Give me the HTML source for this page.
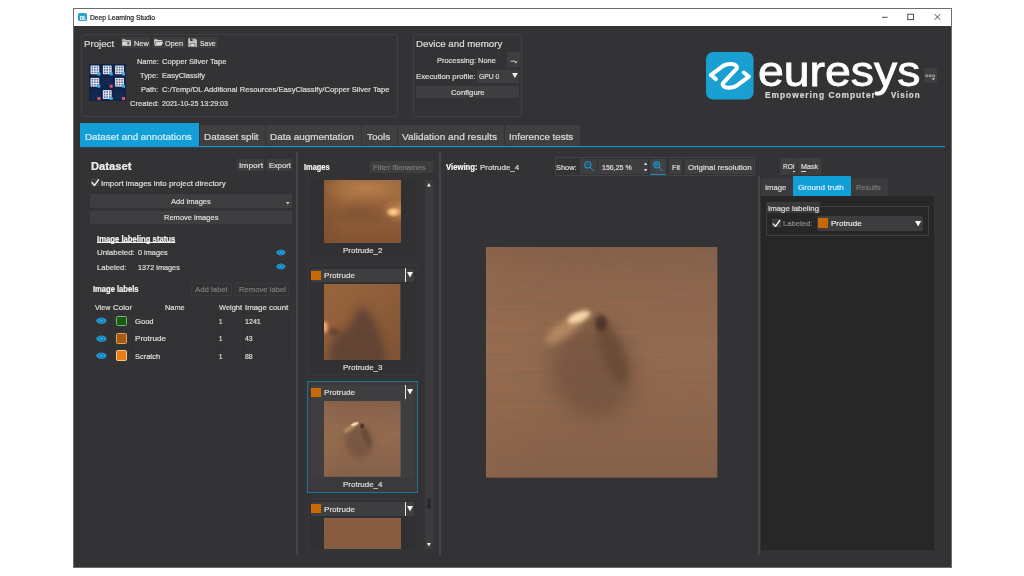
<!DOCTYPE html>
<html lang="en"><head><meta charset="utf-8"><title>Deep Learning Studio</title>
<style>
html,body{margin:0;padding:0;background:#fff;}
body{width:1024px;height:576px;position:relative;overflow:hidden;font-family:"Liberation Sans",sans-serif;}
.r{position:absolute;}
.t{position:absolute;white-space:pre;line-height:1;transform-origin:0 0;-webkit-text-stroke:0.22px currentColor;}
.sf{font-family:"Liberation Serif",serif;}
svg{position:absolute;overflow:visible;}
</style></head><body>
<div class="r" style="left:72.50px;top:8.00px;width:879.50px;height:560.00px;background:#fff;border:1px solid #6e6e6e;box-sizing:border-box;"></div>
<div class="r" style="left:73.50px;top:26.30px;width:877.50px;height:540.70px;background:#333335;"></div>
<div class="r" style="left:78.00px;top:12.50px;width:9.00px;height:8.80px;background:#2fa3cf;border-radius:1.5px;"></div>
<svg style="left:876px;top:9px" width="72" height="17" viewBox="876 9 72 17"><g stroke="#222" stroke-width="0.8" fill="none"><path d="M882 17.3H887.6"/><rect x="907.8" y="14.2" width="5.7" height="5.5"/><path d="M934.6 14.1L940.3 19.8M940.3 14.1L934.6 19.8"/></g></svg>
<div class="r" style="left:81.40px;top:34.20px;width:316.60px;height:83.00px;border:1px solid #404042;box-sizing:border-box;border-radius:3px;"></div>
<div class="r" style="left:121.30px;top:37.00px;width:28.90px;height:11.40px;background:#3e3e40;border-radius:1px;"></div>
<div class="r" style="left:152.60px;top:37.00px;width:32.30px;height:11.40px;background:#3e3e40;border-radius:1px;"></div>
<div class="r" style="left:186.60px;top:37.00px;width:30.00px;height:11.40px;background:#3e3e40;border-radius:1px;"></div>
<svg style="left:122.3px;top:39.1px" width="9.2" height="7" viewBox="0 0 92 76" preserveAspectRatio="none"><path d="M2 8 Q2 2 8 2 H30 L38 12 H84 Q90 12 90 18 V68 Q90 74 84 74 H8 Q2 74 2 68Z" fill="#d8d8d8"/><path d="M2 24H90" stroke="#3e3e40" stroke-width="6"/><path d="M62 34V62M48 48H76" stroke="#3e3e40" stroke-width="9"/></svg>
<svg style="left:153.7px;top:39.1px" width="9.2" height="7" viewBox="0 0 92 76" preserveAspectRatio="none"><path d="M2 8 Q2 2 8 2 H30 L38 12 H74 Q80 12 80 18 V24 H20 L2 62Z" fill="#d8d8d8"/><path d="M24 30 H92 L74 74 H4Z" fill="#d8d8d8"/></svg>
<svg style="left:188px;top:38.3px" width="9.1" height="9.4" viewBox="0 0 92 92" preserveAspectRatio="none"><path d="M4 4 H72 L88 20 V88 H4Z" fill="#d8d8d8"/><rect x="20" y="4" width="44" height="28" fill="#3e3e40"/><rect x="46" y="8" width="12" height="20" fill="#d8d8d8"/><rect x="18" y="48" width="56" height="40" fill="#3e3e40"/><rect x="24" y="54" width="44" height="30" fill="#d8d8d8"/></svg>
<svg style="left:89px;top:63.6px" width="37" height="37" viewBox="0 0 37 37"><rect width="37" height="37" fill="#0f2449"/><rect x="1.9" y="1.9" width="8" height="8" fill="#54678f"/><path d="M1.90 2.10h8M2.10 1.90v8M1.90 4.65h8M4.65 1.90v8M1.90 7.20h8M7.20 1.90v8M1.90 9.75h8M9.75 1.90v8" stroke="#e6ebf7" stroke-width="1.0" fill="none"/><rect x="8.4" y="8.4" width="3" height="3" fill="#3aaeea"/><rect x="14.2" y="1.9" width="8" height="8" fill="#54678f"/><path d="M14.20 2.10h8M14.40 1.90v8M14.20 4.65h8M16.95 1.90v8M14.20 7.20h8M19.50 1.90v8M14.20 9.75h8M22.05 1.90v8" stroke="#e6ebf7" stroke-width="1.0" fill="none"/><rect x="20.7" y="8.4" width="3" height="3" fill="#3aaeea"/><rect x="26.5" y="1.9" width="8" height="8" fill="#54678f"/><path d="M26.50 2.10h8M26.70 1.90v8M26.50 4.65h8M29.25 1.90v8M26.50 7.20h8M31.80 1.90v8M26.50 9.75h8M34.35 1.90v8" stroke="#e6ebf7" stroke-width="1.0" fill="none"/><rect x="33.0" y="8.4" width="3" height="3" fill="#3aaeea"/><rect x="1.9" y="14.2" width="8" height="8" fill="#54678f"/><path d="M1.90 14.40h8M2.10 14.20v8M1.90 16.95h8M4.65 14.20v8M1.90 19.50h8M7.20 14.20v8M1.90 22.05h8M9.75 14.20v8" stroke="#e6ebf7" stroke-width="1.0" fill="none"/><rect x="8.4" y="20.7" width="3" height="3" fill="#3aaeea"/><path d="M14.20 14.40h8M14.40 14.20v8M14.20 16.95h8M16.95 14.20v8M14.20 19.50h8M19.50 14.20v8M14.20 22.05h8M22.05 14.20v8" stroke="#1d3360" stroke-width="0.6" fill="none"/><rect x="20.7" y="20.7" width="3" height="3" fill="#e0566c"/><rect x="26.5" y="14.2" width="8" height="8" fill="#54678f"/><path d="M26.50 14.40h8M26.70 14.20v8M26.50 16.95h8M29.25 14.20v8M26.50 19.50h8M31.80 14.20v8M26.50 22.05h8M34.35 14.20v8" stroke="#e6ebf7" stroke-width="1.0" fill="none"/><rect x="33.0" y="20.7" width="3" height="3" fill="#3aaeea"/><path d="M1.90 26.70h8M2.10 26.50v8M1.90 29.25h8M4.65 26.50v8M1.90 31.80h8M7.20 26.50v8M1.90 34.35h8M9.75 26.50v8" stroke="#1d3360" stroke-width="0.6" fill="none"/><rect x="8.4" y="33.0" width="3" height="3" fill="#e0566c"/><rect x="14.2" y="26.5" width="8" height="8" fill="#54678f"/><path d="M14.20 26.70h8M14.40 26.50v8M14.20 29.25h8M16.95 26.50v8M14.20 31.80h8M19.50 26.50v8M14.20 34.35h8M22.05 26.50v8" stroke="#e6ebf7" stroke-width="1.0" fill="none"/><rect x="20.7" y="33.0" width="3" height="3" fill="#3aaeea"/><path d="M26.50 26.70h8M26.70 26.50v8M26.50 29.25h8M29.25 26.50v8M26.50 31.80h8M31.80 26.50v8M26.50 34.35h8M34.35 26.50v8" stroke="#1d3360" stroke-width="0.6" fill="none"/><rect x="33.0" y="33.0" width="3" height="3" fill="#e0566c"/></svg>
<div class="r" style="left:412.50px;top:34.20px;width:109.80px;height:83.00px;border:1px solid #404042;box-sizing:border-box;border-radius:3px;"></div>
<div class="r" style="left:507.00px;top:52.30px;width:12.50px;height:14.40px;background:#3e3e40;border-radius:1px;"></div>
<svg style="left:510px;top:60px" width="8" height="4" viewBox="0 0 8 4"><path d="M0.5 1.2H5.2" stroke="#d8d8d8" stroke-width="0.9"/><path d="M4.2 1.4H7.4L5.8 3.4Z" fill="#d8d8d8"/></svg>
<div class="r" style="left:476.90px;top:69.80px;width:42.60px;height:13.00px;background:#3e3e40;border-radius:1px;"></div>
<svg style="left:512.2px;top:73.4px" width="5.8" height="5" viewBox="0 0 58 50"><path d="M0 0H58L29 50Z" fill="#f0f0f0"/></svg>
<div class="r" style="left:415.60px;top:85.50px;width:103.90px;height:12.50px;background:#3e3e40;border-radius:1px;"></div>
<svg style="left:706px;top:51.7px" width="47.6" height="47.6" viewBox="0 0 47.6 47.6"><rect width="47.6" height="47.6" rx="7.2" fill="#1a9fd2"/><path d="M9.90 27.10 L4.80 23.05 L16.40 14.30 C18.80 12.50 21.50 11.90 24.80 11.90 C30.30 11.90 32.90 15.40 28.90 18.30 L18.70 29.30 C14.70 32.20 17.30 35.70 22.80 35.70 C26.10 35.70 28.80 35.10 31.20 33.30 L42.80 24.55 L37.70 20.50" fill="none" stroke="#fff" stroke-width="4" stroke-linecap="round" stroke-linejoin="round"/></svg>
<div class="r" style="left:924.00px;top:68.30px;width:13.40px;height:14.60px;background:#3e3e40;border-radius:1px;"></div>
<svg style="left:925.2px;top:73.6px" width="10.5" height="7" viewBox="0 0 105 70"><g fill="none" stroke="#cfcfcf" stroke-width="7"><circle cx="18" cy="18" r="11"/><circle cx="52" cy="18" r="11"/><circle cx="86" cy="18" r="11"/></g><path d="M66 42H100L83 62Z" fill="#cfcfcf"/></svg>
<div class="r" style="left:79.80px;top:122.60px;width:119.50px;height:24.40px;background:#129ed6;"></div>
<div class="r" style="left:200.20px;top:125.40px;width:64.80px;height:20.80px;background:#3f3f41;"></div>
<div class="r" style="left:266.00px;top:125.40px;width:95.00px;height:20.80px;background:#3f3f41;"></div>
<div class="r" style="left:362.00px;top:125.40px;width:34.80px;height:20.80px;background:#3f3f41;"></div>
<div class="r" style="left:397.80px;top:125.40px;width:106.00px;height:20.80px;background:#3f3f41;"></div>
<div class="r" style="left:504.80px;top:125.40px;width:75.20px;height:20.80px;background:#3f3f41;"></div>
<div class="r" style="left:79.80px;top:145.70px;width:865.20px;height:1.30px;background:#2e8ab4;"></div>
<div class="r" style="left:79.80px;top:147.00px;width:865.20px;height:1.00px;background:#114c68;"></div>
<div class="r" style="left:237.30px;top:158.80px;width:26.80px;height:12.40px;background:#3e3e40;border-radius:1px;"></div>
<div class="r" style="left:267.40px;top:158.80px;width:24.80px;height:12.40px;background:#3e3e40;border-radius:1px;"></div>
<div class="r" style="left:91.10px;top:178.70px;width:8.40px;height:7.60px;background:#3a3a3c;border:1px solid #464648;box-sizing:border-box;"></div>
<svg style="left:0;top:0" width="1024" height="576" viewBox="0 0 1024 576"><path d="M92.0 182.5 L94.4 185.5 L98.6 179.6" fill="none" stroke="#f6f6f6" stroke-width="1.3" stroke-linecap="round" stroke-linejoin="round"/></svg>
<div class="r" style="left:90.20px;top:193.80px;width:202.00px;height:14.20px;background:#3e3e40;border-radius:1px;"></div>
<svg style="left:286.4px;top:202.4px" width="3.6" height="2.4" viewBox="0 0 36 24"><path d="M0 0H36L18 24Z" fill="#cfcfcf"/></svg>
<div class="r" style="left:90.20px;top:211.30px;width:202.00px;height:12.90px;background:#3e3e40;border-radius:1px;"></div>
<svg style="left:276.10px;top:249.37px" width="9.8" height="6.86" viewBox="0 0 108 76"><path d="M1 38 C20 -6 88 -6 107 38 C88 82 20 82 1 38Z" fill="#1b9bd8"/><circle cx="54" cy="38" r="21" fill="none" stroke="#245c7e" stroke-width="6"/><circle cx="52" cy="35" r="5" fill="#8ad6f6"/></svg>
<svg style="left:276.10px;top:263.17px" width="9.8" height="6.86" viewBox="0 0 108 76"><path d="M1 38 C20 -6 88 -6 107 38 C88 82 20 82 1 38Z" fill="#1b9bd8"/><circle cx="54" cy="38" r="21" fill="none" stroke="#245c7e" stroke-width="6"/><circle cx="52" cy="35" r="5" fill="#8ad6f6"/></svg>
<div class="r" style="left:191.30px;top:282.50px;width:40.50px;height:13.20px;border:1px solid #3a3a3c;box-sizing:border-box;border-radius:1px;"></div>
<div class="r" style="left:235.00px;top:282.50px;width:53.70px;height:13.20px;border:1px solid #3a3a3c;box-sizing:border-box;border-radius:1px;"></div>
<div class="r" style="left:92.50px;top:313.10px;width:195.30px;height:0.80px;background:#2f2f31;"></div>
<div class="r" style="left:92.50px;top:330.30px;width:195.30px;height:0.80px;background:#2f2f31;"></div>
<div class="r" style="left:92.50px;top:347.30px;width:195.30px;height:0.80px;background:#2f2f31;"></div>
<div class="r" style="left:92.50px;top:364.50px;width:195.30px;height:0.80px;background:#2f2f31;"></div>
<div class="r" style="left:110.30px;top:313.10px;width:0.80px;height:51.40px;background:#2f2f31;"></div>
<div class="r" style="left:132.40px;top:313.10px;width:0.80px;height:51.40px;background:#2f2f31;"></div>
<div class="r" style="left:216.50px;top:313.10px;width:0.80px;height:51.40px;background:#2f2f31;"></div>
<div class="r" style="left:242.70px;top:313.10px;width:0.80px;height:51.40px;background:#2f2f31;"></div>
<div class="r" style="left:287.50px;top:313.10px;width:0.80px;height:51.40px;background:#2f2f31;"></div>
<svg style="left:95.90px;top:317.32px" width="10.8" height="7.56" viewBox="0 0 108 76"><path d="M1 38 C20 -6 88 -6 107 38 C88 82 20 82 1 38Z" fill="#1b9bd8"/><circle cx="54" cy="38" r="21" fill="none" stroke="#245c7e" stroke-width="6"/><circle cx="52" cy="35" r="5" fill="#8ad6f6"/></svg>
<div class="r" style="left:116.10px;top:315.90px;width:10.80px;height:10.60px;background:#165c12;border:1.2px solid #7fb07a;box-sizing:border-box;border-radius:1.5px;"></div>
<svg style="left:95.90px;top:334.57px" width="10.8" height="7.56" viewBox="0 0 108 76"><path d="M1 38 C20 -6 88 -6 107 38 C88 82 20 82 1 38Z" fill="#1b9bd8"/><circle cx="54" cy="38" r="21" fill="none" stroke="#245c7e" stroke-width="6"/><circle cx="52" cy="35" r="5" fill="#8ad6f6"/></svg>
<div class="r" style="left:116.10px;top:333.15px;width:10.80px;height:10.60px;background:#a85a10;border:1.2px solid #d9a468;box-sizing:border-box;border-radius:1.5px;"></div>
<svg style="left:95.90px;top:351.82px" width="10.8" height="7.56" viewBox="0 0 108 76"><path d="M1 38 C20 -6 88 -6 107 38 C88 82 20 82 1 38Z" fill="#1b9bd8"/><circle cx="54" cy="38" r="21" fill="none" stroke="#245c7e" stroke-width="6"/><circle cx="52" cy="35" r="5" fill="#8ad6f6"/></svg>
<div class="r" style="left:116.10px;top:350.40px;width:10.80px;height:10.60px;background:#ea7c16;border:1.2px solid #f6c796;box-sizing:border-box;border-radius:1.5px;"></div>
<div class="r" style="left:296.20px;top:151.80px;width:2.00px;height:402.90px;background:#454547;"></div>
<div class="r" style="left:438.80px;top:151.80px;width:2.00px;height:402.90px;background:#454547;"></div>
<div class="r" style="left:370.10px;top:160.60px;width:63.30px;height:12.10px;background:#3d3d3f;border-radius:1px;"></div>
<div class="r" style="left:424.90px;top:179.80px;width:7.90px;height:369.20px;background:#3c3c3e;"></div>
<svg style="left:426.9px;top:182.6px" width="3.8" height="3.4" viewBox="0 0 38 34"><path d="M0 34H38L19 0Z" fill="#f0f0f0"/></svg>
<svg style="left:426.9px;top:543.2px" width="3.8" height="3.4" viewBox="0 0 38 34"><path d="M0 0H38L19 34Z" fill="#f0f0f0"/></svg>
<div class="r" style="left:426.80px;top:497.60px;width:4.10px;height:11.40px;background:#2a2a2c;border-radius:2px;"></div>
<div class="r" style="left:307.60px;top:179.80px;width:110.40px;height:78.20px;background:#313133;border:1px solid #39393b;box-sizing:border-box;border-top:none;"></div>
<div class="r" style="left:324px;top:179.80px;width:76.5px;height:63.70px;overflow:hidden"><div style="position:absolute;left:0;top:-12.30px;width:76.5px;height:76px;background:radial-gradient(ellipse 8px 5.5px at 90% 58%, #ffd9a0 0%, #f4b876 40%, rgba(210,140,84,0) 100%),radial-gradient(ellipse 20px 13px at 100% 56%, rgba(216,150,92,.75), rgba(200,130,80,0) 100%),radial-gradient(ellipse 34px 12px at 45% 60%, rgba(116,76,46,.6), rgba(116,76,46,0) 100%),radial-gradient(ellipse 44px 15px at 55% 26%, rgba(190,134,78,.75), rgba(190,134,78,0) 100%),linear-gradient(90deg,rgba(120,76,44,.45) 0%,rgba(120,76,44,0) 25%),linear-gradient(180deg,#92603a 0%,#a0693e 35%,#8e5c38 65%,#845432 100%)"></div></div>
<div class="r" style="left:307.60px;top:264.70px;width:110.40px;height:110.70px;background:#313133;border:1px solid #39393b;box-sizing:border-box;"></div>
<div class="r" style="left:310.50px;top:268.50px;width:103.80px;height:13.80px;background:#3f3f41;border-radius:1px;"></div>
<div class="r" style="left:311.40px;top:270.70px;width:9.20px;height:9.10px;background:#c96a08;"></div>
<div class="r" style="left:405.00px;top:268.10px;width:0.90px;height:14.20px;background:#e8e8e8;"></div>
<svg style="left:406.8px;top:272.30px" width="6" height="5.6" viewBox="0 0 60 56"><path d="M0 0H60L30 56Z" fill="#f4f4f4"/></svg>
<svg style="left:324px;top:283.8px" width="76.4" height="76" viewBox="0 0 76 76" preserveAspectRatio="none">
<defs><linearGradient id="t3g" x1="0" y1="0" x2="1" y2="1"><stop offset="0" stop-color="#99653d"/><stop offset="0.5" stop-color="#8e5d39"/><stop offset="1" stop-color="#805336"/></linearGradient>
<filter id="t3b" x="-50%" y="-50%" width="200%" height="200%"><feGaussianBlur stdDeviation="4"/></filter>
<filter id="t3c" x="-50%" y="-50%" width="200%" height="200%"><feGaussianBlur stdDeviation="1.6"/></filter>
<clipPath id="t3k"><rect width="76" height="76"/></clipPath></defs>
<rect width="76" height="76" fill="url(#t3g)"/>
<g clip-path="url(#t3k)">
<path d="M37 22 C48 28 60 52 62 82 L5 82 C3 62 9 50 21 46 C28 42 30 28 37 22Z" fill="#5e4234" opacity="0.92" filter="url(#t3b)"/>
<ellipse cx="10" cy="48" rx="5" ry="4" fill="#5c4030" opacity="0.7" filter="url(#t3c)"/>
<ellipse cx="0.5" cy="43" rx="3.2" ry="6" fill="#f2aa66" filter="url(#t3c)"/>
</g></svg>
<div class="r" style="left:306.60px;top:380.90px;width:111.40px;height:111.70px;background:#3a3a3c;border:1px solid #1f7396;box-sizing:border-box;"></div>
<div class="r" style="left:310.50px;top:384.80px;width:103.80px;height:92.50px;background:#3e3e40;"></div>
<div class="r" style="left:310.50px;top:385.30px;width:103.80px;height:13.80px;background:#3f3f41;border-radius:1px;"></div>
<div class="r" style="left:311.40px;top:387.50px;width:9.20px;height:9.10px;background:#c96a08;"></div>
<div class="r" style="left:405.00px;top:384.90px;width:0.90px;height:14.20px;background:#e8e8e8;"></div>
<svg style="left:406.8px;top:389.10px" width="6" height="5.6" viewBox="0 0 60 56"><path d="M0 0H60L30 56Z" fill="#f4f4f4"/></svg>
<svg style="left:324px;top:401px" width="76.5" height="75.8" viewBox="0 0 231.3 230.6" preserveAspectRatio="none">
<defs>
<linearGradient id="kg" x1="0" y1="0" x2="0" y2="1"><stop offset="0" stop-color="#845f48"/><stop offset="0.12" stop-color="#8f664c"/><stop offset="0.45" stop-color="#986d50"/><stop offset="0.75" stop-color="#90674c"/><stop offset="1" stop-color="#865f48"/></linearGradient>
<linearGradient id="kh" x1="0" y1="0" x2="1" y2="0"><stop offset="0" stop-color="#a06e4a" stop-opacity="0.3"/><stop offset="0.3" stop-color="#8a6248" stop-opacity="0.1"/><stop offset="1" stop-color="#8a644c" stop-opacity="0.2"/></linearGradient>
<filter id="k8" x="-50%" y="-50%" width="200%" height="200%"><feGaussianBlur stdDeviation="10"/></filter>
<filter id="k3" x="-50%" y="-50%" width="200%" height="200%"><feGaussianBlur stdDeviation="3.5"/></filter>
<filter id="k2" x="-50%" y="-50%" width="200%" height="200%"><feGaussianBlur stdDeviation="2"/></filter>
<filter id="kn" x="0" y="0" width="100%" height="100%"><feTurbulence type="fractalNoise" baseFrequency="0.012 0.3" numOctaves="2" seed="4"/><feColorMatrix type="matrix" values="0 0 0 0 0.2  0 0 0 0 0.13  0 0 0 0 0.09  0.9 0.9 0.9 0 -1.1"/></filter>
<clipPath id="kc"><rect width="231.3" height="230.6"/></clipPath>
</defs>
<rect width="231.3" height="230.6" fill="url(#kg)"/>
<rect width="231.3" height="230.6" fill="url(#kh)"/>
<g clip-path="url(#kc)">
<rect width="231.3" height="230.6" filter="url(#kn)" opacity="0.5"/>
<ellipse cx="106" cy="124" rx="42" ry="50" fill="#684a38" opacity="0.55" filter="url(#k8)" transform="rotate(-18 106 124)"/>
<ellipse cx="127" cy="106" rx="11" ry="34" fill="#583c2c" opacity="0.45" filter="url(#k3)" transform="rotate(-20 127 106)"/>
<ellipse cx="78" cy="83" rx="22" ry="7.5" fill="#d2a274" opacity="0.6" filter="url(#k3)" transform="rotate(-34 78 83)"/>
<ellipse cx="93" cy="70" rx="12" ry="5" fill="#f6d8a8" filter="url(#k2)" transform="rotate(-22 93 70)"/>
<ellipse cx="115" cy="76" rx="6" ry="8" fill="#4a3226" opacity="0.9" filter="url(#k2)"/>
</g></svg>
<div class="r" style="left:307.60px;top:498.50px;width:110.40px;height:50.50px;background:#313133;border:1px solid #39393b;box-sizing:border-box;border-bottom:none;"></div>
<div class="r" style="left:310.50px;top:502.10px;width:103.80px;height:13.80px;background:#3f3f41;border-radius:1px;"></div>
<div class="r" style="left:311.40px;top:504.30px;width:9.20px;height:9.10px;background:#c96a08;"></div>
<div class="r" style="left:405.00px;top:501.70px;width:0.90px;height:14.20px;background:#e8e8e8;"></div>
<svg style="left:406.8px;top:505.90px" width="6" height="5.6" viewBox="0 0 60 56"><path d="M0 0H60L30 56Z" fill="#f4f4f4"/></svg>
<div class="r" style="left:324px;top:517.50px;width:76.5px;height:31.50px;overflow:hidden"><div style="position:absolute;left:0;top:-44.50px;width:76.5px;height:76px;background:linear-gradient(180deg,#8b6044 0%,#865c41 100%)"></div></div>
<div class="r" style="left:554.60px;top:157.30px;width:200.80px;height:18.50px;border:1px solid #424244;box-sizing:border-box;border-radius:1px;"></div>
<div class="r" style="left:579.60px;top:159.00px;width:17.40px;height:15.00px;background:#3e3e40;"></div>
<div class="r" style="left:598.30px;top:159.00px;width:50.10px;height:15.00px;background:#3e3e40;"></div>
<svg style="left:644.2px;top:162px" width="3.2" height="10" viewBox="0 0 32 100"><path d="M0 30H32L16 4Z M0 70H32L16 96Z" fill="#e8e8e8"/></svg>
<div class="r" style="left:650.00px;top:159.00px;width:16.40px;height:15.00px;background:#414143;"></div>
<div class="r" style="left:650.00px;top:173.50px;width:16.40px;height:1.50px;background:#1a8fc4;"></div>
<svg style="left:583.6px;top:160.9px" width="10" height="10.4" viewBox="0 0 100 104"><circle cx="38" cy="38" r="31" fill="none" stroke="#1b9bd8" stroke-width="11"/><path d="M62 62L95 98" stroke="#2a9fd6" stroke-width="8" stroke-linecap="round"/><path d="M27 38H49" stroke="#1b9bd8" stroke-width="8"/></svg>
<svg style="left:653.2px;top:160.9px" width="10" height="10.4" viewBox="0 0 100 104"><circle cx="38" cy="38" r="31" fill="none" stroke="#1b9bd8" stroke-width="11"/><path d="M62 62L95 98" stroke="#2a9fd6" stroke-width="8" stroke-linecap="round"/><rect x="27" y="27" width="22" height="22" fill="#1b7fb0" stroke="#1b9bd8" stroke-width="6"/></svg>
<div class="r" style="left:669.10px;top:159.00px;width:13.40px;height:15.00px;background:#3e3e40;"></div>
<div class="r" style="left:684.70px;top:159.00px;width:68.10px;height:15.00px;background:#3e3e40;"></div>
<svg style="left:486.4px;top:247px" width="231.3" height="230.6" viewBox="0 0 231.3 230.6" preserveAspectRatio="none">
<defs>
<linearGradient id="mg" x1="0" y1="0" x2="0" y2="1"><stop offset="0" stop-color="#845f48"/><stop offset="0.12" stop-color="#8f664c"/><stop offset="0.45" stop-color="#986d50"/><stop offset="0.75" stop-color="#90674c"/><stop offset="1" stop-color="#865f48"/></linearGradient>
<linearGradient id="mh" x1="0" y1="0" x2="1" y2="0"><stop offset="0" stop-color="#a06e4a" stop-opacity="0.3"/><stop offset="0.3" stop-color="#8a6248" stop-opacity="0.1"/><stop offset="1" stop-color="#8a644c" stop-opacity="0.2"/></linearGradient>
<filter id="m8" x="-50%" y="-50%" width="200%" height="200%"><feGaussianBlur stdDeviation="10"/></filter>
<filter id="m3" x="-50%" y="-50%" width="200%" height="200%"><feGaussianBlur stdDeviation="3.5"/></filter>
<filter id="m2" x="-50%" y="-50%" width="200%" height="200%"><feGaussianBlur stdDeviation="2"/></filter>
<filter id="mn" x="0" y="0" width="100%" height="100%"><feTurbulence type="fractalNoise" baseFrequency="0.012 0.3" numOctaves="2" seed="4"/><feColorMatrix type="matrix" values="0 0 0 0 0.2  0 0 0 0 0.13  0 0 0 0 0.09  0.9 0.9 0.9 0 -1.1"/></filter>
<clipPath id="mc"><rect width="231.3" height="230.6"/></clipPath>
</defs>
<rect width="231.3" height="230.6" fill="url(#mg)"/>
<rect width="231.3" height="230.6" fill="url(#mh)"/>
<g clip-path="url(#mc)">
<rect width="231.3" height="230.6" filter="url(#mn)" opacity="0.5"/>
<ellipse cx="106" cy="124" rx="42" ry="50" fill="#684a38" opacity="0.55" filter="url(#m8)" transform="rotate(-18 106 124)"/>
<ellipse cx="127" cy="106" rx="11" ry="34" fill="#583c2c" opacity="0.45" filter="url(#m3)" transform="rotate(-20 127 106)"/>
<ellipse cx="78" cy="83" rx="22" ry="7.5" fill="#d2a274" opacity="0.6" filter="url(#m3)" transform="rotate(-34 78 83)"/>
<ellipse cx="93" cy="70" rx="12" ry="5" fill="#f6d8a8" filter="url(#m2)" transform="rotate(-22 93 70)"/>
<ellipse cx="115" cy="76" rx="6" ry="8" fill="#4a3226" opacity="0.9" filter="url(#m2)"/>
</g></svg>
<div class="r" style="left:758.10px;top:176.00px;width:2.10px;height:378.70px;background:#464648;"></div>
<div class="r" style="left:780.10px;top:158.20px;width:16.90px;height:16.80px;background:#3e3e40;border-radius:1px;"></div>
<div class="r" style="left:797.70px;top:158.20px;width:23.30px;height:16.80px;background:#3e3e40;border-radius:1px;"></div>
<div class="r" style="left:792.60px;top:170.60px;width:2.00px;height:0.70px;background:#dcdcdc;"></div>
<div class="r" style="left:801.10px;top:170.60px;width:5.30px;height:0.70px;background:#dcdcdc;"></div>
<div class="r" style="left:761.00px;top:179.20px;width:31.90px;height:16.80px;background:#3b3b3d;"></div>
<div class="r" style="left:851.40px;top:179.20px;width:36.60px;height:16.80px;background:#3b3b3d;"></div>
<div class="r" style="left:793.20px;top:176.00px;width:57.80px;height:20.00px;background:#129ed6;"></div>
<div class="r" style="left:761.00px;top:196.00px;width:173.00px;height:353.50px;background:#272727;"></div>
<div class="r" style="left:766.00px;top:206.40px;width:162.60px;height:30.10px;border:1px solid #404040;box-sizing:border-box;"></div>
<div class="r" style="left:766.00px;top:201.70px;width:54.40px;height:11.80px;background:#3a3a3c;"></div>
<div class="r" style="left:772.20px;top:219.40px;width:8.60px;height:7.70px;background:#383838;border:1px solid #464648;box-sizing:border-box;"></div>
<svg style="left:0;top:0" width="1024" height="576" viewBox="0 0 1024 576"><path d="M773.2 223.9 L775.6 226.3 L779.7 220.5" fill="none" stroke="#f6f6f6" stroke-width="1.3" stroke-linecap="round" stroke-linejoin="round"/></svg>
<div class="r" style="left:817.20px;top:216.30px;width:105.50px;height:14.50px;background:#3d3d3f;border-radius:2px;"></div>
<div class="r" style="left:817.90px;top:218.20px;width:9.70px;height:10.30px;background:#c66808;"></div>
<svg style="left:915.1px;top:221px" width="6.2" height="5.6" viewBox="0 0 62 56"><path d="M0 0H62L31 56Z" fill="#f4f4f4"/></svg>
<span class="t" id="t0" style="left:79.60px;top:15.97px;font-size:5px;color:#fff;font-weight:bold;transform:scaleX(0.8993);">DL</span>
<span class="t" id="t1" style="left:90.10px;top:14.17px;font-size:7.6px;color:#1c1c1c;transform:scaleX(0.8847);">Deep Learning Studio</span>
<span class="t" id="t2" style="left:84.20px;top:39.20px;font-size:9.8px;color:#dcdcdc;transform:scaleX(0.9869);">Project</span>
<span class="t" id="t3" style="left:134.30px;top:40.10px;font-size:7.8px;color:#dcdcdc;transform:scaleX(0.9417);">New</span>
<span class="t" id="t4" style="left:165.40px;top:40.10px;font-size:7.8px;color:#dcdcdc;transform:scaleX(0.9487);">Open</span>
<span class="t" id="t5" style="left:199.75px;top:40.10px;font-size:7.8px;color:#dcdcdc;transform:scaleX(0.8801);">Save</span>
<span class="t" id="t6" style="left:136.60px;top:58.40px;font-size:7.8px;color:#dcdcdc;transform:scaleX(0.9535);">Name:</span>
<span class="t" id="t7" style="left:162.00px;top:58.40px;font-size:7.8px;color:#dcdcdc;transform:scaleX(0.9747);">Copper Silver Tape</span>
<span class="t" id="t8" style="left:140.30px;top:72.20px;font-size:7.8px;color:#dcdcdc;transform:scaleX(0.9540);">Type:</span>
<span class="t" id="t9" style="left:162.00px;top:72.20px;font-size:7.8px;color:#dcdcdc;transform:scaleX(0.9632);">EasyClassify</span>
<span class="t" id="t10" style="left:141.30px;top:86.00px;font-size:7.8px;color:#dcdcdc;transform:scaleX(0.9441);">Path:</span>
<span class="t" id="t11" style="left:162.00px;top:86.00px;font-size:7.8px;color:#dcdcdc;transform:scaleX(0.9831);">C:/Temp/DL Additional Resources/EasyClassify/Copper Silver Tape</span>
<span class="t" id="t12" style="left:129.50px;top:99.80px;font-size:7.8px;color:#dcdcdc;transform:scaleX(0.9697);">Created:</span>
<span class="t" id="t13" style="left:162.00px;top:99.80px;font-size:7.8px;color:#dcdcdc;transform:scaleX(0.9115);">2021-10-25 13:29:03</span>
<span class="t" id="t14" style="left:415.60px;top:39.20px;font-size:9.8px;color:#dcdcdc;transform:scaleX(0.9905);">Device and memory</span>
<span class="t" id="t15" style="left:436.70px;top:56.80px;font-size:7.8px;color:#dcdcdc;transform:scaleX(0.9570);">Processing: None</span>
<span class="t" id="t16" style="left:415.60px;top:72.90px;font-size:7.8px;color:#dcdcdc;transform:scaleX(0.9981);">Execution profile:</span>
<span class="t" id="t17" style="left:478.60px;top:72.90px;font-size:7.8px;color:#dcdcdc;transform:scaleX(0.8673);">GPU 0</span>
<span class="t" id="t18" style="left:450.80px;top:88.50px;font-size:7.8px;color:#dcdcdc;transform:scaleX(0.9937);">Configure</span>
<span class="t" id="t19" style="left:758.20px;top:51.18px;font-size:42.2px;color:#fff;transform:scaleX(1.0994);-webkit-text-stroke:0.8px #fff;">euresys</span>
<span class="t" id="t20" style="left:764.60px;top:92.06px;font-size:8.2px;color:#d6d6d6;font-weight:bold;transform:scaleX(1.0158);letter-spacing:1px;">Empowering Computer</span>
<span class="t" id="t21" style="left:890.80px;top:92.06px;font-size:8.2px;color:#d6d6d6;font-weight:bold;transform:scaleX(0.9697);letter-spacing:1px;">Vision</span>
<span class="t" id="t22" style="left:203.50px;top:132.14px;font-size:9.7px;color:#dcdcdc;transform:scaleX(1.0242);">Dataset split</span>
<span class="t" id="t23" style="left:270.25px;top:132.14px;font-size:9.7px;color:#dcdcdc;transform:scaleX(1.0229);">Data augmentation</span>
<span class="t" id="t24" style="left:366.50px;top:132.14px;font-size:9.7px;color:#dcdcdc;transform:scaleX(1.0276);">Tools</span>
<span class="t" id="t25" style="left:401.75px;top:132.14px;font-size:9.7px;color:#dcdcdc;transform:scaleX(1.0335);">Validation and results</span>
<span class="t" id="t26" style="left:508.75px;top:132.14px;font-size:9.7px;color:#dcdcdc;transform:scaleX(1.0111);">Inference tests</span>
<span class="t" id="t27" style="left:84.50px;top:132.14px;font-size:9.7px;color:#d4eefa;transform:scaleX(1.0168);">Dataset and annotations</span>
<span class="t" id="t28" style="left:90.70px;top:160.57px;font-size:11.5px;color:#f0f0f0;font-weight:bold;transform:scaleX(0.9744);">Dataset</span>
<span class="t" id="t29" style="left:238.60px;top:161.90px;font-size:7.8px;color:#dcdcdc;transform:scaleX(1.0855);">Import</span>
<span class="t" id="t30" style="left:269.00px;top:161.90px;font-size:7.8px;color:#dcdcdc;transform:scaleX(0.9713);">Export</span>
<span class="t" id="t31" style="left:101.20px;top:180.10px;font-size:7.8px;color:#dcdcdc;transform:scaleX(1.0241);">Import images into project directory</span>
<span class="t" id="t32" style="left:171.20px;top:197.60px;font-size:7.8px;color:#dcdcdc;transform:scaleX(0.9663);">Add images</span>
<span class="t" id="t33" style="left:164.20px;top:214.40px;font-size:7.8px;color:#dcdcdc;transform:scaleX(0.9655);">Remove images</span>
<span class="t" id="t34" style="left:96.80px;top:234.70px;font-size:8.5px;color:#f4f4f4;font-weight:bold;transform:scaleX(0.9057);text-decoration:underline;text-decoration-skip-ink:none;text-underline-offset:0.3px;text-decoration-thickness:0.9px;">Image labeling status</span>
<span class="t" id="t35" style="left:96.80px;top:249.40px;font-size:7.8px;color:#dcdcdc;transform:scaleX(1.0139);">Unlabeled:</span>
<span class="t" id="t36" style="left:137.70px;top:249.40px;font-size:7.8px;color:#dcdcdc;transform:scaleX(0.9387);">0 images</span>
<span class="t" id="t37" style="left:96.80px;top:263.70px;font-size:7.8px;color:#dcdcdc;transform:scaleX(0.9859);">Labeled:</span>
<span class="t" id="t38" style="left:137.70px;top:263.70px;font-size:7.8px;color:#dcdcdc;transform:scaleX(0.9360);">1372 images</span>
<span class="t" id="t39" style="left:92.80px;top:285.00px;font-size:8.5px;color:#f4f4f4;font-weight:bold;transform:scaleX(0.8916);">Image labels</span>
<span class="t" id="t40" style="left:194.80px;top:286.30px;font-size:7.8px;color:#7b7b7d;transform:scaleX(1.0026);">Add label</span>
<span class="t" id="t41" style="left:239.00px;top:286.30px;font-size:7.8px;color:#7b7b7d;transform:scaleX(0.9856);">Remove label</span>
<span class="t" id="t42" style="left:94.60px;top:303.80px;font-size:7.8px;color:#dcdcdc;transform:scaleX(0.9126);">View</span>
<span class="t" id="t43" style="left:112.75px;top:303.80px;font-size:7.8px;color:#dcdcdc;transform:scaleX(1.0220);">Color</span>
<span class="t" id="t44" style="left:165.00px;top:303.80px;font-size:7.8px;color:#dcdcdc;transform:scaleX(0.9465);">Name</span>
<span class="t" id="t45" style="left:218.60px;top:303.80px;font-size:7.8px;color:#dcdcdc;transform:scaleX(0.9528);">Weight</span>
<span class="t" id="t46" style="left:244.50px;top:303.80px;font-size:7.8px;color:#dcdcdc;transform:scaleX(1.0088);">Image count</span>
<span class="t" id="t47" style="left:134.60px;top:318.00px;font-size:7.8px;color:#dcdcdc;transform:scaleX(0.9749);">Good</span>
<span class="t" id="t48" style="left:219.30px;top:318.00px;font-size:7.8px;color:#dcdcdc;transform:scaleX(0.7827);">1</span>
<span class="t" id="t49" style="left:245.10px;top:318.00px;font-size:7.8px;color:#dcdcdc;transform:scaleX(0.9102);">1241</span>
<span class="t" id="t50" style="left:134.60px;top:335.30px;font-size:7.8px;color:#dcdcdc;transform:scaleX(1.0399);">Protrude</span>
<span class="t" id="t51" style="left:219.30px;top:335.30px;font-size:7.8px;color:#dcdcdc;transform:scaleX(0.7827);">1</span>
<span class="t" id="t52" style="left:245.10px;top:335.30px;font-size:7.8px;color:#dcdcdc;transform:scaleX(0.8863);">43</span>
<span class="t" id="t53" style="left:134.60px;top:352.60px;font-size:7.8px;color:#dcdcdc;transform:scaleX(0.9532);">Scratch</span>
<span class="t" id="t54" style="left:219.30px;top:352.60px;font-size:7.8px;color:#dcdcdc;transform:scaleX(0.7827);">1</span>
<span class="t" id="t55" style="left:245.10px;top:352.60px;font-size:7.8px;color:#dcdcdc;transform:scaleX(0.8863);">88</span>
<span class="t" id="t56" style="left:304.00px;top:162.80px;font-size:8.5px;color:#f4f4f4;font-weight:bold;transform:scaleX(0.8704);">Images</span>
<span class="t" id="t57" style="left:372.50px;top:163.50px;font-size:7.8px;color:#78787a;transform:scaleX(0.9948);">Filter filenames</span>
<span class="t" id="t58" style="left:342.75px;top:247.00px;font-size:7.8px;color:#dcdcdc;transform:scaleX(1.0239);">Protrude_2</span>
<span class="t" id="t59" style="left:324.00px;top:272.00px;font-size:7.8px;color:#dcdcdc;transform:scaleX(1.0399);">Protrude</span>
<span class="t" id="t60" style="left:342.75px;top:363.80px;font-size:7.8px;color:#dcdcdc;transform:scaleX(1.0239);">Protrude_3</span>
<span class="t" id="t61" style="left:324.00px;top:388.80px;font-size:7.8px;color:#dcdcdc;transform:scaleX(1.0399);">Protrude</span>
<span class="t" id="t62" style="left:342.75px;top:480.90px;font-size:7.8px;color:#dcdcdc;transform:scaleX(1.0239);">Protrude_4</span>
<span class="t" id="t63" style="left:324.00px;top:505.60px;font-size:7.8px;color:#dcdcdc;transform:scaleX(1.0399);">Protrude</span>
<span class="t" id="t64" style="left:445.90px;top:162.80px;font-size:8.5px;color:#f4f4f4;font-weight:bold;transform:scaleX(0.9081);">Viewing:</span>
<span class="t" id="t65" style="left:479.80px;top:163.50px;font-size:7.8px;color:#dcdcdc;transform:scaleX(1.0135);">Protrude_4</span>
<span class="t" id="t66" style="left:555.80px;top:163.50px;font-size:7.8px;color:#dcdcdc;transform:scaleX(0.9505);">Show:</span>
<span class="t" id="t67" style="left:601.50px;top:163.50px;font-size:7.8px;color:#dcdcdc;transform:scaleX(0.9013);">156,25 %</span>
<span class="t" id="t68" style="left:671.80px;top:163.50px;font-size:7.8px;color:#dcdcdc;transform:scaleX(0.9341);">Fit</span>
<span class="t" id="t69" style="left:687.90px;top:163.50px;font-size:7.8px;color:#dcdcdc;transform:scaleX(1.0120);">Original resolution</span>
<span class="t" id="t70" style="left:782.90px;top:163.40px;font-size:7.8px;color:#dcdcdc;transform:scaleX(0.8432);">ROI</span>
<span class="t" id="t71" style="left:801.10px;top:163.40px;font-size:7.8px;color:#dcdcdc;transform:scaleX(0.9174);">Mask</span>
<span class="t" id="t72" style="left:764.60px;top:184.00px;font-size:7.8px;color:#dcdcdc;transform:scaleX(0.9759);">Image</span>
<span class="t" id="t73" style="left:797.60px;top:184.00px;font-size:7.8px;color:#d4eefa;transform:scaleX(1.0438);">Ground truth</span>
<span class="t" id="t74" style="left:855.70px;top:184.00px;font-size:7.8px;color:#7b7b7d;transform:scaleX(0.9500);">Results</span>
<span class="t" id="t75" style="left:767.60px;top:204.70px;font-size:7.8px;color:#dcdcdc;transform:scaleX(1.0055);">Image labeling</span>
<span class="t" id="t76" style="left:783.00px;top:220.40px;font-size:7.8px;color:#8a8a8c;transform:scaleX(0.9826);">Labeled:</span>
<span class="t" id="t77" style="left:831.30px;top:220.40px;font-size:7.8px;color:#e4e4e4;transform:scaleX(1.0265);">Protrude</span>
</body></html>
